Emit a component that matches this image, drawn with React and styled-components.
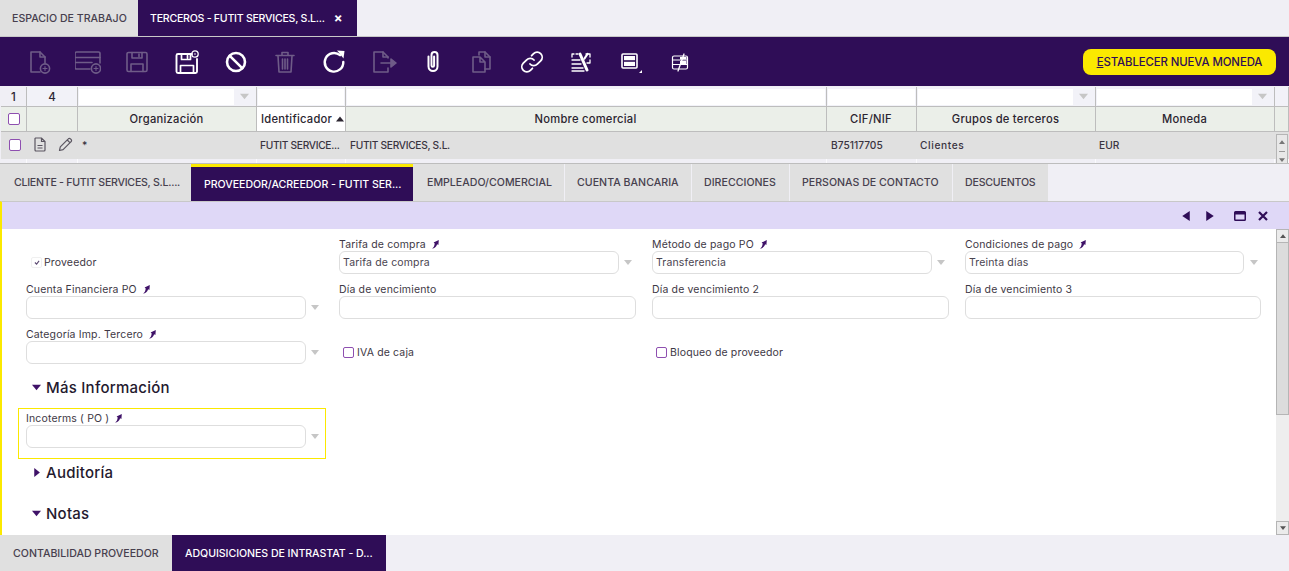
import React from 'react';
import styled, { createGlobalStyle } from 'styled-components';

const PURPLE = '#2f0d57';
const FONT = 'Inter, "Noto Sans", "Liberation Sans", sans-serif';

const GlobalStyle = createGlobalStyle`
  html, body {
    margin: 0;
    padding: 0;
    background: #f0eff5;
    overflow: hidden;
  }
  * { box-sizing: border-box; }
`;

const Page = styled.div`
  width: 1289px;
  height: 571px;
  display: flex;
  flex-direction: column;
  overflow: hidden;
  font-family: ${FONT};
  color: #3a3440;
  background: #f0eff5;
`;

const TabStrip = styled.div`
  display: flex;
  flex: none;
  height: ${(p) => p.$h}px;
  border-bottom: ${(p) => (p.$line ? '1px solid #c8c8c8' : 'none')};
`;

const Tab = styled.div`
  flex: none;
  width: ${(p) => p.$w}px;
  display: flex;
  align-items: center;
  padding-left: ${(p) => p.$pad || 13}px;
  gap: 9px;
  font-size: 10.6px;
  font-weight: 500;
  white-space: nowrap;
  letter-spacing: ${(p) => p.$track ?? 0}px;
  background: ${(p) => (p.$active ? PURPLE : '#e0e0e0')};
  color: ${(p) => (p.$active ? '#fff' : '#47404e')};
  border-top: ${(p) => (p.$mark ? '3px solid #fbe900' : 'none')};
  border-left: ${(p) => (p.$sep ? '1px solid #f0eff5' : 'none')};
`;

const TabClose = styled.span`
  font-size: 13px;
  font-weight: 700;
  line-height: 1;
`;

const Toolbar = styled.div`
  flex: none;
  height: 49px;
  background: ${PURPLE};
  display: flex;
  align-items: center;
  justify-content: space-between;
  padding: 0 13px 0 14px;
`;

const ToolGroup = styled.div`
  display: flex;
  align-items: center;
`;

const ToolButton = styled.div`
  width: 49.3px;
  height: 30px;
  display: flex;
  align-items: center;
  justify-content: center;
  color: ${(p) => (p.$off ? '#6f5c88' : '#fff')};
`;

const ActionButton = styled.div`
  width: 193px;
  height: 26px;
  border-radius: 8px;
  background: #fbe900;
  color: ${PURPLE};
  font-size: 11.4px;
  font-weight: 500;
  display: flex;
  align-items: center;
  justify-content: center;
  letter-spacing: -0.1px;
  u { text-decoration: underline; }
`;

const GridPanel = styled.div`
  flex: none;
  height: 78px;
  padding: 1px 0 0 1px;
  background: #f0eff5;
  border-bottom: 1px solid #bdbdbd;
  position: relative;
  overflow: hidden;
`;

const COLUMNS = '26px 51px 179px 89px 481px 90px 179px 179px 14px';

const Row = styled.div`
  display: grid;
  grid-template-columns: ${COLUMNS};
  height: ${(p) => p.$h}px;
  border-bottom: ${(p) => (p.$line ? '1px solid #bdbdbd' : 'none')};
  background: ${(p) => p.$bg || 'transparent'};
`;

const FilterCell = styled.div`
  display: flex;
  align-items: center;
  justify-content: center;
  padding: 1px;
  border-right: 1px solid #bdbdbd;
  font-size: 11.5px;
  font-weight: 500;
  color: #2d2733;
  background: ${(p) => (p.$first ? '#f0eff5' : '#f2f2f8')};
`;

const FilterInput = styled.div`
  flex: 1;
  height: 16px;
  background: #fff;
`;

const FilterArrowSlot = styled.div`
  width: 21px;
  display: flex;
  justify-content: center;
`;

const HeaderCell = styled.div`
  display: flex;
  align-items: center;
  justify-content: ${(p) => (p.$left ? 'flex-start' : 'center')};
  gap: 4px;
  padding: 0 ${(p) => (p.$left ? 0 : 1)}px 0 ${(p) => (p.$left ? 4 : 0)}px;
  border-right: 1px solid #bdbdbd;
  background: ${(p) => (p.$sorted ? '#fff' : '#ebefe9')};
  font-size: 11.2px;
  font-weight: 500;
  color: #2b2530;
  letter-spacing: 0.25px;
`;

const DataCell = styled.div`
  display: flex;
  align-items: center;
  padding: 0 0 2px ${(p) => p.$pad ?? 4}px;
  gap: 11px;
  font-size: 10.2px;
  font-weight: 500;
  color: #3a3440;
  white-space: nowrap;
  overflow: hidden;
  letter-spacing: ${(p) => p.$track ?? 0}px;
  justify-content: ${(p) => (p.$center ? 'center' : 'flex-start')};
`;

const BlankCell = styled.div`
  border-right: 1px solid #fbfbfd;
`;

const Check = styled.span`
  display: inline-block;
  flex: none;
  width: ${(p) => p.$size || 11}px;
  height: ${(p) => p.$size || 11}px;
  margin-left: ${(p) => p.$nudge || 0}px;
  border-radius: 2px;
  border: 1px solid #8e4fb0;
  background: #fff;
`;

const MiniScroll = styled.div`
  position: absolute;
  right: 1px;
  top: 48px;
  width: 12px;
  height: 30px;
  background: #e8e8e8;
  border: 1px solid #b5b5b5;
  border-bottom: none;
  display: flex;
  flex-direction: column;
  align-items: center;
  justify-content: space-between;
  padding: 4px 0 1px;
`;

const MiniGrip = styled.span`
  width: 6px;
  height: 1px;
  background: #9a9a9a;
`;

const DetailBar = styled.div`
  flex: none;
  height: 28px;
  background: #dfd8f7;
  border-left: 2px solid #fbe900;
  border-top: 1px solid #c8c8c8;
  display: flex;
  align-items: center;
  justify-content: flex-end;
  padding-right: 21px;
  gap: 14px;
  color: ${PURPLE};
`;

const BarIcon = styled.span`
  display: flex;
  margin-left: ${(p) => p.$shift || 0}px;
`;

const DetailBody = styled.div`
  flex: 1;
  min-height: 0;
  display: flex;
  background: #fff;
  border-left: 2px solid #fbe900;
`;

const FormArea = styled.div`
  flex: 1;
  min-width: 0;
  padding-top: 8px;
  overflow: hidden;
`;

const FieldGrid = styled.div`
  display: grid;
  grid-template-columns: repeat(4, 313px);
  grid-auto-rows: 37px;
  row-gap: 8px;
  padding-left: 24px;
`;

const Field = styled.div`
  display: flex;
  flex-direction: column;
`;

const FieldLabel = styled.div`
  height: 14px;
  display: flex;
  align-items: center;
  gap: 5px;
  font-size: 10.5px;
  color: #3e3845;
  white-space: nowrap;
  letter-spacing: 0.15px;
`;

const InputRow = styled.div`
  display: flex;
  align-items: center;
  height: 23px;
`;

const Input = styled.div`
  width: ${(p) => p.$w}px;
  height: 23px;
  border: 1px solid #dedede;
  border-radius: 6px;
  background: #fff;
  display: flex;
  align-items: center;
  padding-left: 3px;
  font-size: 10.5px;
  color: #4a4450;
  letter-spacing: 0.15px;
`;

const ComboArrow = styled.span`
  width: 0;
  height: 0;
  margin-left: ${(p) => p.$gap || 5}px;
  border-left: 4.5px solid transparent;
  border-right: 4.5px solid transparent;
  border-top: 5px solid #c6c6c6;
`;

const CheckField = styled.div`
  display: flex;
  align-items: center;
  gap: ${(p) => (p.$low ? 3 : 2)}px;
  height: 100%;
  padding: ${(p) => (p.$low ? '13px' : '14px')} 0 0 ${(p) => (p.$low ? '4px' : '5px')};
  font-size: 10.5px;
  color: #3e3845;
  letter-spacing: 0.15px;
`;

const Ticked = styled.span`
  width: 11px;
  height: 11px;
  display: flex;
  align-items: center;
  justify-content: center;
  border: 1px solid #f0f0f0;
  border-radius: 2px;
  color: #5c4a72;
`;

const SectionHead = styled.div`
  display: flex;
  align-items: center;
  height: 24px;
  padding-left: 30px;
  gap: 5px;
  margin-top: ${(p) => p.$top}px;
  font-size: 15px;
  font-weight: 500;
  color: #24192e;
  letter-spacing: 0.25px;
`;

const Highlight = styled.div`
  width: 308px;
  height: 51px;
  margin: 9px 0 1px 16px;
  border: 1px solid #fbe900;
  padding: 2px 0 0 7px;
`;

const ScrollTrack = styled.div`
  flex: none;
  width: 13px;
  background: #eeeeee;
  display: flex;
  flex-direction: column;
  justify-content: space-between;
  position: relative;
`;

const ScrollCap = styled.div`
  height: 14px;
  background: #ebebeb;
  border: 1px solid #b5b5b5;
  display: flex;
  align-items: center;
  justify-content: center;
`;

const ScrollThumb = styled.div`
  position: absolute;
  top: 14px;
  left: 0;
  width: 13px;
  height: 172px;
  background: #dcdcdc;
  border-left: 1px solid #b5b5b5;
  border-right: 1px solid #b5b5b5;
  border-bottom: 1px solid #b5b5b5;
`;

const Tri = ({ dir = 'down', size = 8, color = 'currentColor' }) => {
  const pts = {
    down: '0,1.5 8,1.5 4,6.5',
    up: '0,6.5 8,6.5 4,1.5',
    left: '7,0 7,8 1,4',
    right: '1,0 1,8 7,4',
    caret: '2,0 2,8 7,4',
  }[dir];
  return (
    <svg width={size} height={size} viewBox="0 0 8 8">
      <polygon points={pts} fill={color} />
    </svg>
  );
};

const Pin = () => (
  <svg width="9" height="10" viewBox="0 0 9 10">
    <path d="M1 9.6 C2.6 8.6 3.4 7 3.7 4.4 L2.6 3.6 L7.8 1 L7.4 6 L6.1 5.2 C5.4 7.6 3.6 9.2 1 9.6 Z" fill="#3f1268" />
  </svg>
);

const Svg = ({ w = 26, h = 26, children }) => (
  <svg width={w} height={h} viewBox="0 0 26 26" fill="none" stroke="currentColor" strokeWidth="1.6" strokeLinejoin="round" strokeLinecap="round">
    {children}
  </svg>
);

const PlusDot = ({ cx, cy, r = 4.6 }) => (
  <>
    <circle cx={cx} cy={cy} r={r} />
    <path d={`M${cx - 2} ${cy}H${cx + 2}M${cx} ${cy - 2}V${cy + 2}`} strokeWidth="1.1" />
  </>
);

const toolIcons = {
  newDoc: (
    <Svg>
      <path d="M14 23H5V3h9l5 5v6" />
      <path d="M14 3v5h5" />
      <PlusDot cx={19} cy={19.5} />
    </Svg>
  ),
  newRow: (
    <Svg>
      <path d="M15 20H1.5a1.5 1.5 0 0 1-1.5-1.5v-14A1.5 1.5 0 0 1 1.5 3h22A1.5 1.5 0 0 1 25 4.5V14" />
      <path d="M0 8.5h25M0 13.5h17" />
      <PlusDot cx={21} cy={19.5} />
    </Svg>
  ),
  save: (
    <Svg>
      <path d="M4.5 3.5h17a1.5 1.5 0 0 1 1.5 1.5v16a1.5 1.5 0 0 1-1.5 1.5h-17A1.5 1.5 0 0 1 3 21V5a1.5 1.5 0 0 1 1.5-1.5Z" />
      <path d="M8 3.5v5.5h10V3.5M15 5v2.5M7 22.5V15h12v7.5" />
    </Svg>
  ),
  saveClose: (
    <Svg>
      <path d="M18 5H4A1.5 1.5 0 0 0 2.5 6.5v16A1.5 1.5 0 0 0 4 24h17.5a1.5 1.5 0 0 0 1.5-1.5V10" strokeWidth="1.9" />
      <path d="M7.5 5v5.5h9V5M13.5 6.5v2.5M6.5 24v-7.5h13V24" strokeWidth="1.7" />
      <circle cx="21" cy="5" r="3.2" strokeWidth="1.3" />
      <circle cx="21" cy="5" r="0.8" fill="currentColor" stroke="none" />
    </Svg>
  ),
  undo: (
    <Svg>
      <circle cx="13" cy="13" r="9" strokeWidth="2.6" />
      <path d="M6.8 6.8l12.4 12.4" strokeWidth="2.6" />
    </Svg>
  ),
  trash: (
    <Svg>
      <path d="M4 6.5h18M10 6V3.5h6V6M6 7l1 16h12l1-16M10.5 10v10M13 10v10M15.5 10v10" />
    </Svg>
  ),
  refresh: (
    <Svg>
      <path d="M19 6.2A9.3 9.3 0 1 0 22.3 13" strokeWidth="2.4" />
      <polygon points="16,1.5 23.5,2 22.5,9.5" fill="currentColor" stroke="none" />
    </Svg>
  ),
  exportDoc: (
    <Svg>
      <path d="M17 9V8l-5-5H3v20h14v-4" />
      <path d="M12 3v5h5M10 14h10" />
      <polygon points="20,10 25,14 20,18" fill="currentColor" />
    </Svg>
  ),
  clip: (
    <Svg>
      <path d="M8.5 8v10a4.5 4.5 0 0 0 9 0V6.5a3 3 0 0 0-6 0V17a1.3 1.3 0 0 0 2.6 0V8" strokeWidth="2" transform="translate(0 -.5)" />
    </Svg>
  ),
  copy: (
    <Svg>
      <path d="M10 6V3h6l5 5v12h-5" />
      <path d="M16 3v5h5M4 8h7l5 5v10H4ZM11 8v5h5" />
    </Svg>
  ),
  link: (
    <Svg>
      <path d="M11 15a5 5 0 0 0 7.3.2l3.4-3.4a5 5 0 0 0-7.1-7.1l-2 2" strokeWidth="1.8" />
      <path d="M15 11a5 5 0 0 0-7.3-.2l-3.4 3.4a5 5 0 0 0 7.1 7.1l2-2" strokeWidth="1.8" />
    </Svg>
  ),
  tools: (
    <Svg>
      <path d="M4 5h2M8 5h2M4 5v3M4 11h8M4 15h9M4 19h11M4 22h12M18 5h4v3M22 11v3h-3" strokeWidth="1.3" />
      <path d="M12 5l7 16" strokeWidth="3" />
      <path d="M19.5 5l-3 4.5" strokeWidth="2.2" />
    </Svg>
  ),
  form: (
    <Svg>
      <rect x="5" y="5" width="15" height="14" rx="1" strokeWidth="1.6" />
      <rect x="7" y="7" width="11" height="4.2" fill="currentColor" stroke="none" />
      <rect x="7" y="12.8" width="11" height="4.2" fill="currentColor" stroke="none" />
      <polygon points="25,21 25,24 22,24" fill="currentColor" stroke="none" />
    </Svg>
  ),
  noteSlash: (
    <Svg>
      <rect x="5.5" y="7" width="15" height="13" rx="1.5" strokeWidth="1.2" />
      <path d="M5.5 11h15M5.5 15.5h15" strokeWidth="1.2" />
      <rect x="13" y="8" width="6.5" height="2.5" fill="currentColor" stroke="none" />
      <rect x="13" y="12" width="6.5" height="3" fill="currentColor" stroke="none" />
      <path d="M17 5L11 22" strokeWidth="1.3" />
    </Svg>
  ),
};

const tools = [
  ['newDoc', true],
  ['newRow', true],
  ['save', true],
  ['saveClose', false],
  ['undo', false],
  ['trash', true],
  ['refresh', false],
  ['exportDoc', true],
  ['clip', false],
  ['copy', true],
  ['link', false],
  ['tools', false],
  ['form', false],
  ['noteSlash', false],
];

const DocIcon = () => (
  <svg width="14" height="15" viewBox="0 0 14 15" fill="none" stroke="#5a5560" strokeWidth="1.2">
    <path d="M2.5 1h6l3.5 3.5V13a1 1 0 0 1-1 1H3a1 1 0 0 1-1-1V1.5ZM8.5 1v3.5H12M4.5 8.5h5M4.5 11h5" />
  </svg>
);

const PencilIcon = () => (
  <svg width="15" height="15" viewBox="0 0 15 15" fill="none" stroke="#5a5560" strokeWidth="1.2" strokeLinejoin="round">
    <path d="M1.5 13.5l.8-3.6 8-8a1.5 1.5 0 0 1 2.2 0l.6.6a1.5 1.5 0 0 1 0 2.2l-8 8ZM9.3 3l2.8 2.8" />
  </svg>
);

const MaxIcon = () => (
  <svg width="12" height="10" viewBox="0 0 12 10">
    <path d="M1.5 0h9A1.5 1.5 0 0 1 12 1.5v7A1.5 1.5 0 0 1 10.5 10h-9A1.5 1.5 0 0 1 0 8.5v-7A1.5 1.5 0 0 1 1.5 0ZM1.5 3.5v5h9v-5Z" fill="currentColor" fillRule="evenodd" />
  </svg>
);

const CloseIcon = () => (
  <svg width="10" height="10" viewBox="0 0 10 10" stroke="currentColor" strokeWidth="2.2">
    <path d="M1 1l8 8M9 1l-8 8" />
  </svg>
);

const topFilters = [
  { arrow: true },
  {},
  {},
  {},
  { arrow: true },
  { arrow: true },
];

const detailTabs = [
  { label: 'CLIENTE - FUTIT SERVICES, S.L....', w: 191, pad: 14, track: -0.26 },
  { label: 'PROVEEDOR/ACREEDOR - FUTIT SER...', w: 222, active: true, mark: true, track: -0.05 },
  { label: 'EMPLEADO/COMERCIAL', w: 151, pad: 14 },
  { label: 'CUENTA BANCARIA', w: 127, sep: true, pad: 12, track: 0.03 },
  { label: 'DIRECCIONES', w: 98, sep: true, pad: 12, track: 0.03 },
  { label: 'PERSONAS DE CONTACTO', w: 163, sep: true, pad: 12 },
  { label: 'DESCUENTOS', w: 96, sep: true, pad: 12, track: -0.2 },
];

const ComboField = ({ label, value, pin = true, w = 280 }) => (
  <Field>
    <FieldLabel>
      {label}
      {pin && <Pin />}
    </FieldLabel>
    <InputRow>
      <Input $w={w}>{value}</Input>
      <ComboArrow $gap={5 + (280 - w)} />
    </InputRow>
  </Field>
);

const TextField = ({ label, w = 297 }) => (
  <Field>
    <FieldLabel>{label}</FieldLabel>
    <InputRow>
      <Input $w={w} />
    </InputRow>
  </Field>
);

export default function App() {
  return (
    <Page>
      <GlobalStyle />
      <TabStrip $h={37} $line>
        <Tab $w={138} $pad={12}>ESPACIO DE TRABAJO</Tab>
        <Tab $w={219} $pad={12} $active $track={-0.26}>
          TERCEROS - FUTIT SERVICES, S.L...
          <TabClose>×</TabClose>
        </Tab>
      </TabStrip>

      <Toolbar>
        <ToolGroup>
          {tools.map(([name, off]) => (
            <ToolButton key={name} $off={off}>
              {toolIcons[name]}
            </ToolButton>
          ))}
        </ToolGroup>
        <ActionButton>
          <span><u>E</u>STABLECER NUEVA MONEDA</span>
        </ActionButton>
      </Toolbar>

      <GridPanel>
        <Row $h={20} $line>
          <FilterCell $first>1</FilterCell>
          <FilterCell>4</FilterCell>
          {topFilters.map((f, i) => (
            <FilterCell key={i}>
              <FilterInput />
              {f.arrow && (
                <FilterArrowSlot>
                  <Tri size={9} color="#c6c6c6" />
                </FilterArrowSlot>
              )}
            </FilterCell>
          ))}
          <FilterCell />
        </Row>
        <Row $h={25} $line>
          <HeaderCell><Check $size={12} $nudge={2} /></HeaderCell>
          <HeaderCell />
          <HeaderCell>Organización</HeaderCell>
          <HeaderCell $sorted $left>
            Identificador
            <Tri size={8} color="#2b2530" dir="up" />
          </HeaderCell>
          <HeaderCell>Nombre comercial</HeaderCell>
          <HeaderCell>CIF/NIF</HeaderCell>
          <HeaderCell>Grupos de terceros</HeaderCell>
          <HeaderCell>Moneda</HeaderCell>
          <HeaderCell />
        </Row>
        <Row $h={27} $bg="#e0e0e0">
          <DataCell $center $pad={0}><Check $size={12} $nudge={1} /></DataCell>
          <DataCell $pad={0} $center>
            <DocIcon />
            <PencilIcon />
          </DataCell>
          <DataCell>*</DataCell>
          <DataCell $pad={3} $track={-0.3}>FUTIT SERVICE...</DataCell>
          <DataCell $track={-0.3}>FUTIT SERVICES, S.L.</DataCell>
          <DataCell>B75117705</DataCell>
          <DataCell $pad={3} $track={0.6}>Clientes</DataCell>
          <DataCell $pad={3}>EUR</DataCell>
          <DataCell />
        </Row>
        <Row $h={4}>
          {Array.from({ length: 9 }, (_, i) => <BlankCell key={i} />)}
        </Row>
        <MiniScroll>
          <Tri size={6} color="#777" dir="up" />
          <MiniGrip />
          <Tri size={6} color="#777" />
        </MiniScroll>
      </GridPanel>

      <TabStrip $h={37}>
        {detailTabs.map((t) => (
          <Tab key={t.label} $w={t.w} $pad={t.pad} $active={t.active} $mark={t.mark} $sep={t.sep} $track={t.track}>
            {t.label}
          </Tab>
        ))}
      </TabStrip>

      <DetailBar>
        <BarIcon><Tri dir="left" size={10} /></BarIcon>
        <BarIcon><Tri dir="right" size={10} /></BarIcon>
        <BarIcon $shift={5}><MaxIcon /></BarIcon>
        <BarIcon $shift={-2}><CloseIcon /></BarIcon>
      </DetailBar>

      <DetailBody>
        <FormArea>
          <FieldGrid>
            <CheckField>
              <Ticked>
                <svg width="6" height="5" viewBox="0 0 7 6" fill="none" stroke="currentColor" strokeWidth="1.3">
                  <path d="M1 3l2 2 3-4" />
                </svg>
              </Ticked>
              Proveedor
            </CheckField>
            <ComboField label="Tarifa de compra" value="Tarifa de compra" />
            <ComboField label="Método de pago PO" value="Transferencia" />
            <ComboField label="Condiciones de pago" value="Treinta días" w={279} />

            <ComboField label="Cuenta Financiera PO" />
            <TextField label="Día de vencimiento" />
            <TextField label="Día de vencimiento 2" />
            <TextField label="Día de vencimiento 3" w={296} />

            <ComboField label="Categoría Imp. Tercero" />
            <CheckField $low><Check />IVA de caja</CheckField>
            <CheckField $low><Check />Bloqueo de proveedor</CheckField>
          </FieldGrid>

          <SectionHead $top={11}>
            <Tri size={9} color="#3f1268" />
            Más Información
          </SectionHead>
          <Highlight>
            <ComboField label="Incoterms ( PO )" />
          </Highlight>
          <SectionHead $top={0}>
            <Tri size={9} dir="caret" color="#3f1268" />
            Auditoría
          </SectionHead>
          <SectionHead $top={17}>
            <Tri size={9} color="#3f1268" />
            Notas
          </SectionHead>
        </FormArea>
        <ScrollTrack>
          <ScrollCap><Tri size={6} color="#555" dir="up" /></ScrollCap>
          <ScrollThumb />
          <ScrollCap><Tri size={6} color="#555" /></ScrollCap>
        </ScrollTrack>
      </DetailBody>

      <TabStrip $h={36}>
        <Tab $w={172}>CONTABILIDAD PROVEEDOR</Tab>
        <Tab $w={214} $active $track={-0.05}>ADQUISICIONES DE INTRASTAT - D...</Tab>
      </TabStrip>
    </Page>
  );
}
